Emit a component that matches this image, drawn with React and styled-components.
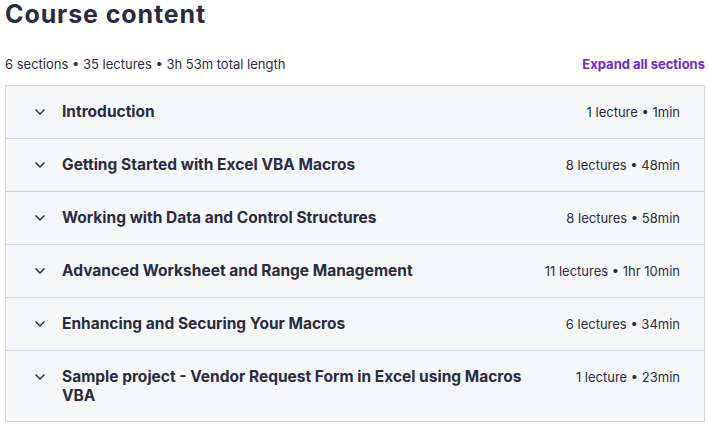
import styled, { createGlobalStyle } from 'styled-components'

const GlobalStyle = createGlobalStyle`
  body {
    margin: 0;
    background: #fff;
    font-family: Inter, "Liberation Sans", sans-serif;
    color: #2a2b3f;
  }
`

const Page = styled.div`
  padding: 0 5px;
  width: 700px;
`

const Heading = styled.h2`
  margin: 0;
  font-size: 25px;
  line-height: 28px;
  font-weight: 700;
  letter-spacing: 0.9px;
  color: #2a2b3f;
`

const SummaryBar = styled.div`
  display: flex;
  justify-content: space-between;
  align-items: center;
  margin-top: 26px;
  margin-bottom: 11px;
  font-size: 13px;
  line-height: 20px;
`

const Stats = styled.span`
  color: #2a2b3f;
`

const ExpandLink = styled.button`
  border: 0;
  background: none;
  padding: 0;
  font: inherit;
  font-weight: 700;
  color: #6d28d2;
  cursor: pointer;
`

const Sections = styled.div`
  border: 1px solid #d1d2e0;
  border-bottom: 0;
`

const Row = styled.div`
  display: flex;
  align-items: flex-start;
  gap: 16px;
  padding: 16px 24px;
  background: #f6f7f9;
  border-bottom: 1px solid #d1d2e0;
`

const Chevron = styled.svg`
  flex: none;
  width: 16px;
  height: 20px;
`

const Title = styled.div`
  flex: 1;
  font-size: 15.5px;
  line-height: 19px;
  font-weight: 700;
  color: #2a2b3f;
`

const Meta = styled.div`
  flex: none;
  margin-left: 8px;
  font-size: 13px;
  line-height: 20px;
  color: #2a2b3f;
`

const sections = [
  { title: 'Introduction', meta: '1 lecture • 1min' },
  { title: 'Getting Started with Excel VBA Macros', meta: '8 lectures • 48min' },
  { title: 'Working with Data and Control Structures', meta: '8 lectures • 58min' },
  { title: 'Advanced Worksheet and Range Management', meta: '11 lectures • 1hr 10min' },
  { title: 'Enhancing and Securing Your Macros', meta: '6 lectures • 34min' },
  { title: 'Sample project - Vendor Request Form in Excel using Macros VBA', meta: '1 lecture • 23min' },
]

function SectionRow({ title, meta }) {
  return (
    <Row>
      <Chevron viewBox="0 0 16 20">
        <polyline points="5.5,7.5 10,12 14.5,7.5" fill="none" stroke="#2a2b3f" strokeWidth="1.5" />
      </Chevron>
      <Title>{title}</Title>
      <Meta>{meta}</Meta>
    </Row>
  )
}

export default function App() {
  return (
    <Page>
      <GlobalStyle />
      <Heading>Course content</Heading>
      <SummaryBar>
        <Stats>6 sections • 35 lectures • 3h 53m total length</Stats>
        <ExpandLink>Expand all sections</ExpandLink>
      </SummaryBar>
      <Sections>
        {sections.map(s => <SectionRow key={s.title} {...s} />)}
      </Sections>
    </Page>
  )
}
